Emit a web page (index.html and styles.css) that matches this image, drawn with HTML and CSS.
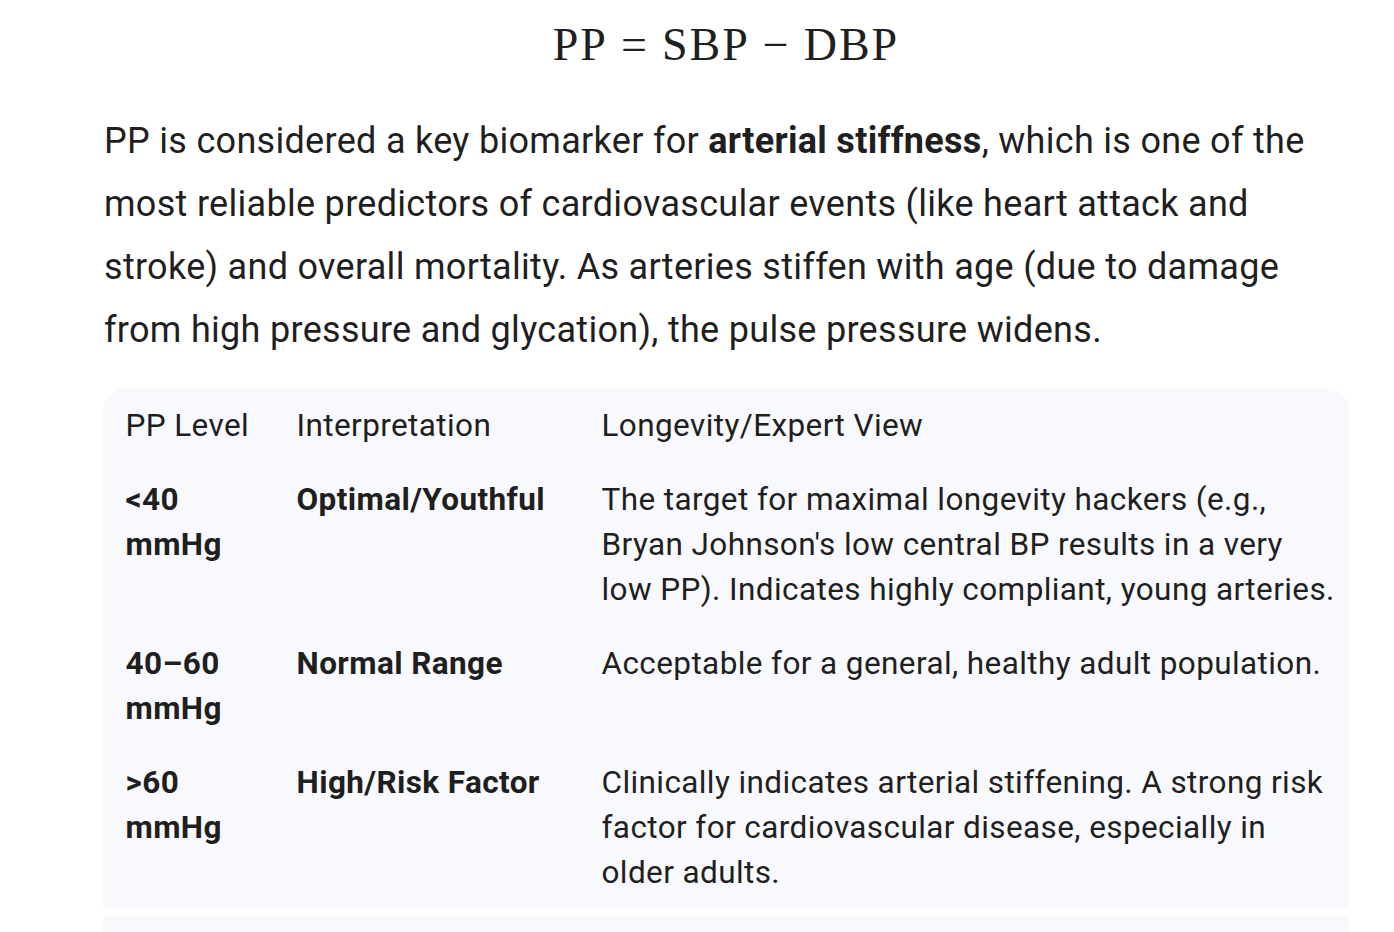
FILE: index.html
```html
<!DOCTYPE html>
<html>
<head>
<meta charset="utf-8">
<link rel="stylesheet" href="styles.css">
</head>
<body>
<main class="content">
  <div class="formula"><span>PP</span><span class="op">=</span><span>SBP</span><span class="op">−</span><span>DBP</span></div>
  <p class="para">PP is considered a key biomarker for <strong>arterial stiffness</strong>, which is one of the most reliable predictors of cardiovascular events (like heart attack and stroke) and overall mortality. As arteries stiffen with age (due to damage from high pressure and glycation), the pulse pressure widens.</p>
  <div class="table-card">
    <table class="data">
      <colgroup><col class="c1"><col class="c2"><col class="c3"></colgroup>
      <thead>
        <tr><th>PP Level</th><th>Interpretation</th><th>Longevity/Expert View</th></tr>
      </thead>
      <tbody>
        <tr><td><strong>&lt;40 mmHg</strong></td><td><strong>Optimal/Youthful</strong></td><td>The target for maximal longevity hackers (e.g., Bryan Johnson's low central BP results in a very low PP). Indicates highly compliant, young arteries.</td></tr>
        <tr><td><strong>40–60 mmHg</strong></td><td><strong>Normal Range</strong></td><td>Acceptable for a general, healthy adult population.</td></tr>
        <tr><td><strong>&gt;60 mmHg</strong></td><td><strong>High/Risk Factor</strong></td><td>Clinically indicates arterial stiffening. A strong risk factor for cardiovascular disease, especially in older adults.</td></tr>
      </tbody>
    </table>
  </div>
  <div class="next-card"></div>
</main>
</body>
</html>
```
FILE: styles.css
```css
html, body {
  margin: 0;
  padding: 0;
  background: #ffffff;
}
body {
  color: #1f1f1f;
  font-family: Roboto, "Noto Sans", sans-serif;
  overflow: hidden;
}
.content {
  width: 1246px;
  margin-left: 103px;
}
.formula {
  display: flex;
  justify-content: center;
  align-items: baseline;
  font-family: "Liberation Serif", "DejaVu Serif", serif;
  font-size: 46px;
  letter-spacing: 2px;
  line-height: 50px;
  padding-top: 20px;
  height: 70px;
  color: #1f1f1f;
}
.formula .op {
  margin: 0 13px;
}
.para {
  margin: 20px 0 0 1px;
  font-size: 36px;
  line-height: 63px;
  letter-spacing: 0.3px;
}
.para strong {
  font-weight: 700;
}
.table-card {
  margin-top: 26px;
  background: #f8f9fc;
  border-radius: 24px 24px 5px 5px;
}
.data {
  width: 100%;
  border-collapse: separate;
  border-spacing: 0;
  table-layout: fixed;
  font-size: 31.5px;
  line-height: 45px;
  letter-spacing: 0.4px;
}
.data .c1 { width: 171px; }
.data .c2 { width: 305px; }
.data th,
.data td {
  text-align: left;
  vertical-align: top;
  padding: 14.5px 22.5px;
  font-weight: 400;
}
.data th:last-child,
.data td:last-child {
  padding-right: 14px;
}
.data strong {
  font-weight: 700;
}
.next-card {
  margin-top: 7px;
  height: 40px;
  background: #f8f9fc;
  border-radius: 5px 5px 0 0;
}
```
